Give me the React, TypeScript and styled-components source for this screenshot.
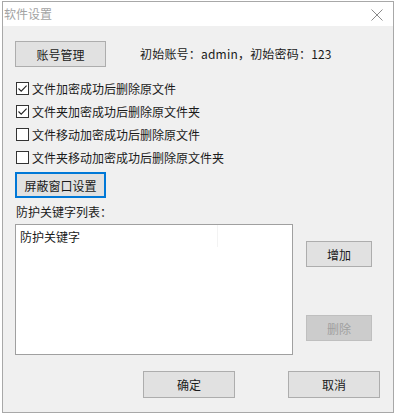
import React from "react";
import styled, { createGlobalStyle } from "styled-components";

const Global = createGlobalStyle`
  html, body { margin: 0; padding: 0; background: #ffffff; }
  body { font-family: "Noto Sans CJK SC", "Microsoft YaHei", "Liberation Sans", sans-serif; font-size: 12px; color: #1a1a1a; }
  * { box-sizing: border-box; }
`;

const Window = styled.div`
  margin: 1px 0 0 2px;
  width: 392px;
  height: 412px;
  border: 1px solid #a8a8a8;
  background: #f0f0f0;
  display: flex;
  flex-direction: column;
`;

const TitleBar = styled.div`
  height: 24px;
  background: #ffffff;
  display: flex;
  align-items: center;
  justify-content: space-between;
  padding: 0 10px 0 1px;
`;

const Title = styled.span`
  color: #a3a3a3;
  font-size: 12px;
  line-height: 16px;
`;

const CloseIcon = styled.svg`
  width: 12px;
  height: 12px;
  margin-top: 1px;
`;

const Body = styled.div`
  flex: 1;
  display: flex;
  flex-direction: column;
  padding: 15px 12px 0 12px;
`;

const TopRow = styled.div`
  display: flex;
  align-items: center;
  gap: 34px;
`;

const Info = styled.span`
  font-size: 12px;
  line-height: 16px;
  letter-spacing: 0.2px;
`;

const Button = styled.button<{ $w: number; $h: number; $focus?: boolean }>`
  width: ${(p) => p.$w}px;
  height: ${(p) => p.$h}px;
  font-family: inherit;
  font-size: 12px;
  color: #1a1a1a;
  background: #e1e1e1;
  border: 1px solid ${(p) => (p.$focus ? "#0078d7" : "#adadad")};
  box-shadow: ${(p) => (p.$focus ? "inset 0 0 0 1px #0078d7" : "none")};
  padding: 0;
  margin: 0;
  display: flex;
  align-items: center;
  justify-content: center;
  &:disabled {
    background: #cccccc;
    border-color: #bfbfbf;
    color: #a0a0a0;
  }
`;

const CheckList = styled.div`
  display: flex;
  flex-direction: column;
  margin-top: 10px;
`;

const CheckRow = styled.label`
  height: 23px;
  display: flex;
  align-items: center;
  gap: 3px;
  padding-left: 1px;
`;

const Box = styled.span`
  width: 13px;
  height: 13px;
  border: 1px solid #333333;
  background: #ffffff;
  display: flex;
  align-items: center;
  justify-content: center;
`;

const CheckText = styled.span`
  font-size: 12px;
  line-height: 16px;
`;

const ShieldRow = styled.div`
  margin-top: 3px;
  display: flex;
`;

const ListLabel = styled.div`
  margin-top: 6px;
  line-height: 16px;
  font-size: 12px;
  padding-left: 1px;
`;

const ListSection = styled.div`
  margin-top: 4px;
  display: flex;
`;

const ListBox = styled.div`
  width: 278px;
  height: 131px;
  border: 1px solid #a0a0a0;
  background: #ffffff;
  display: flex;
  flex-direction: column;
`;

const ListRow = styled.div`
  height: 22px;
  display: flex;
`;

const ListCell = styled.div<{ $w?: number }>`
  width: ${(p) => (p.$w ? `${p.$w}px` : "auto")};
  flex: ${(p) => (p.$w ? "none" : "1")};
  border-right: ${(p) => (p.$w ? "1px solid #f3f3f3" : "none")};
  padding: 4px 0 0 4px;
  line-height: 16px;
`;

const SideButtons = styled.div`
  display: flex;
  flex-direction: column;
  padding: 17px 0 0 13px;
  gap: 48px;
`;

const Footer = styled.div`
  margin-top: 16px;
  display: flex;
  padding-left: 128px;
  gap: 53px;
`;

const Check = () => (
  <svg width="11" height="11" viewBox="0 0 11 11">
    <path d="M1.5 5.5 L4.2 8.2 L9.6 2.6" fill="none" stroke="#222" strokeWidth="1.1" />
  </svg>
);

const items = [
  { t: "文件加密成功后删除原文件", c: true },
  { t: "文件夹加密成功后删除原文件夹", c: true },
  { t: "文件移动加密成功后删除原文件", c: false },
  { t: "文件夹移动加密成功后删除原文件夹", c: false },
];

export default function App() {
  return (
    <>
      <Global />
      <Window>
        <TitleBar>
          <Title>软件设置</Title>
          <CloseIcon viewBox="0 0 12 12">
            <path d="M0.5 0.5 L11.5 11.5 M11.5 0.5 L0.5 11.5" stroke="#8a8a8a" strokeWidth="1" fill="none" />
          </CloseIcon>
        </TitleBar>
        <Body>
          <TopRow>
            <Button $w={91} $h={26}>账号管理</Button>
            <Info>初始账号：admin，初始密码：123</Info>
          </TopRow>
          <CheckList>
            {items.map((it) => (
              <CheckRow key={it.t}>
                <Box>{it.c && <Check />}</Box>
                <CheckText>{it.t}</CheckText>
              </CheckRow>
            ))}
          </CheckList>
          <ShieldRow>
            <Button $w={91} $h={26} $focus>屏蔽窗口设置</Button>
          </ShieldRow>
          <ListLabel>防护关键字列表：</ListLabel>
          <ListSection>
            <ListBox>
              <ListRow>
                <ListCell $w={202}>防护关键字</ListCell>
                <ListCell />
              </ListRow>
            </ListBox>
            <SideButtons>
              <Button $w={66} $h={26}>增加</Button>
              <Button $w={66} $h={26} disabled>删除</Button>
            </SideButtons>
          </ListSection>
          <Footer>
            <Button $w={92} $h={27}>确定</Button>
            <Button $w={92} $h={27}>取消</Button>
          </Footer>
        </Body>
      </Window>
    </>
  );
}
